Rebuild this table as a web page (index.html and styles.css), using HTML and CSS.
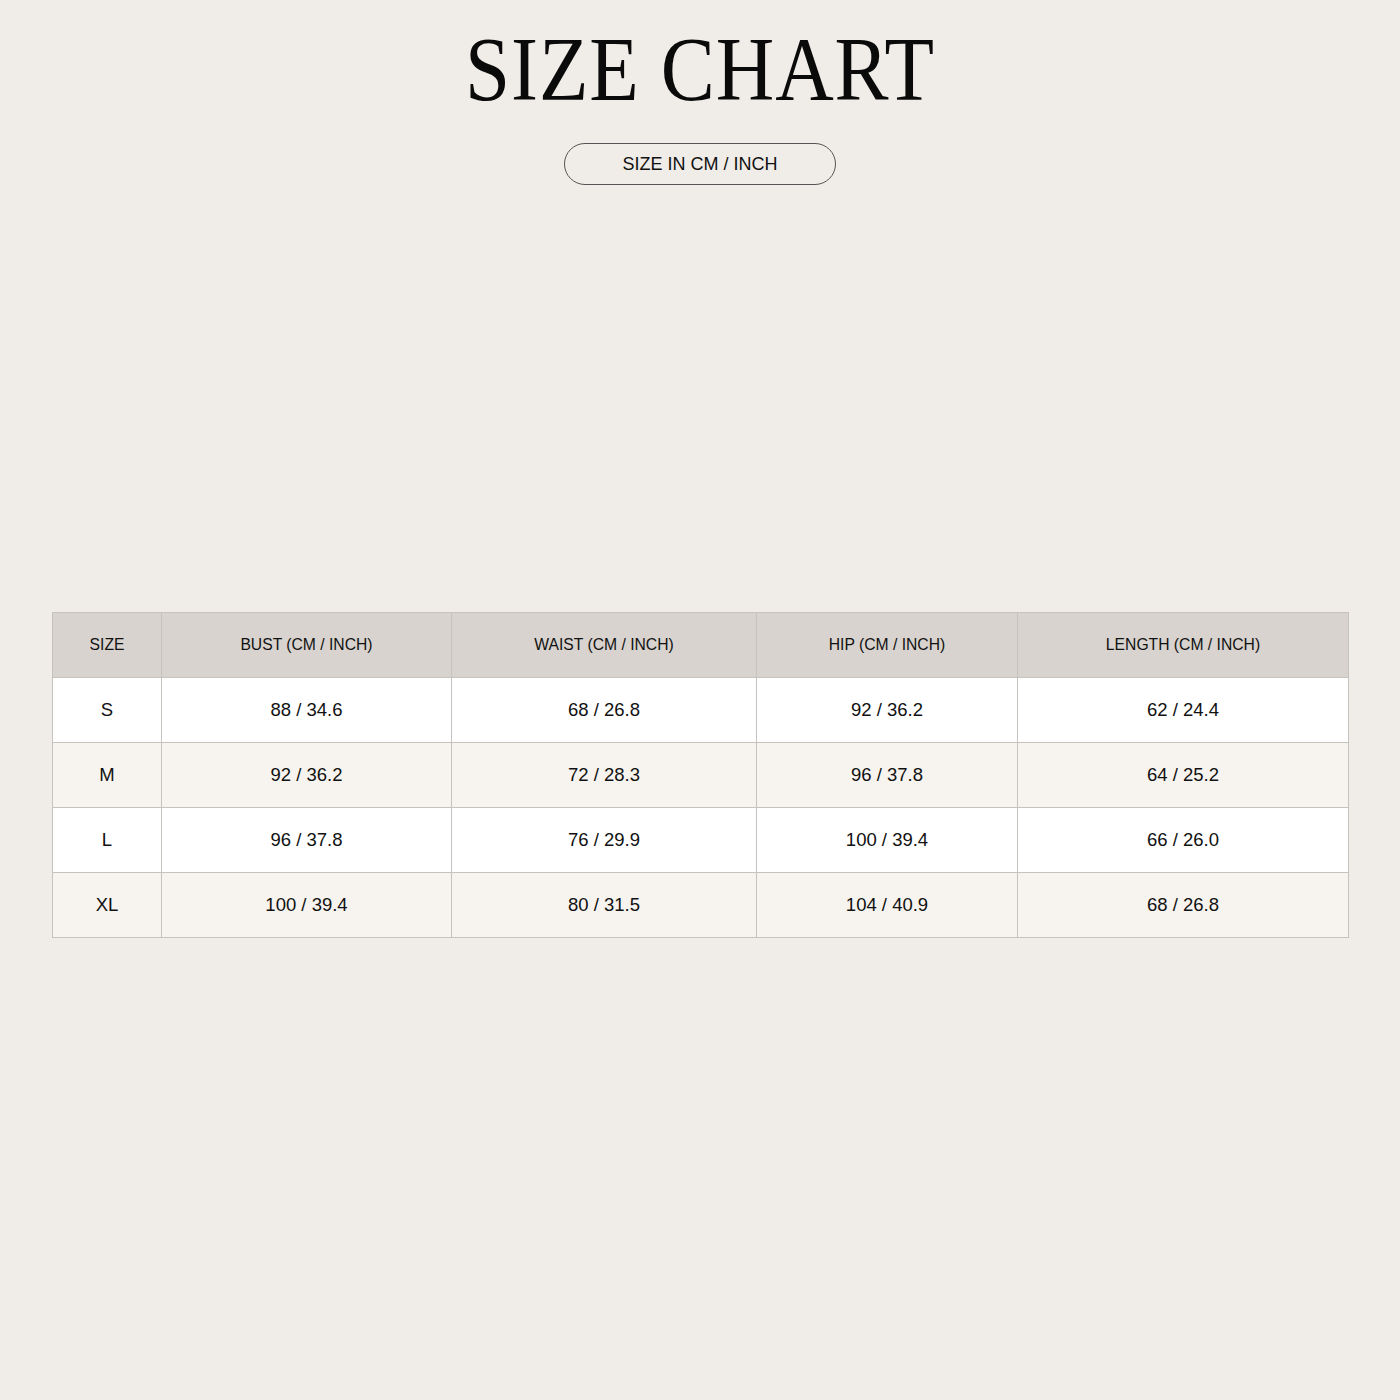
FILE: index.html
```html
<!DOCTYPE html>
<html>
<head>
<meta charset="utf-8">
<link rel="stylesheet" href="styles.css">
</head>
<body>
<header class="head">
  <h1 class="title">SIZE CHART</h1>
  <div class="pill">SIZE IN CM / INCH</div>
</header>
<main class="wrap">
  <table class="chart">
    <colgroup>
      <col class="c1"><col class="c2"><col class="c3"><col class="c4"><col class="c5">
    </colgroup>
    <thead>
      <tr><th>SIZE</th><th>BUST (CM / INCH)</th><th>WAIST (CM / INCH)</th><th>HIP (CM / INCH)</th><th>LENGTH (CM / INCH)</th></tr>
    </thead>
    <tbody>
      <tr><td>S</td><td>88 / 34.6</td><td>68 / 26.8</td><td>92 / 36.2</td><td>62 / 24.4</td></tr>
      <tr><td>M</td><td>92 / 36.2</td><td>72 / 28.3</td><td>96 / 37.8</td><td>64 / 25.2</td></tr>
      <tr><td>L</td><td>96 / 37.8</td><td>76 / 29.9</td><td>100 / 39.4</td><td>66 / 26.0</td></tr>
      <tr><td>XL</td><td>100 / 39.4</td><td>80 / 31.5</td><td>104 / 40.9</td><td>68 / 26.8</td></tr>
    </tbody>
  </table>
</main>
</body>
</html>
```
FILE: styles.css
```css
html, body {
  margin: 0;
  padding: 0;
  background: #f0ede8;
  width: 1400px;
  height: 1400px;
}
body {
  font-family: "Liberation Sans", Arial, sans-serif;
  color: #111;
}
.head {
  display: flex;
  flex-direction: column;
  align-items: center;
  padding-top: 20px;
}
.title {
  margin: 0;
  font-family: "Liberation Serif", "Times New Roman", serif;
  font-weight: 400;
  font-size: 90px;
  line-height: 100px;
  letter-spacing: 1px;
  color: #0a0a0a;
  transform: scaleX(0.9);
}
.pill {
  margin-top: 23px;
  width: 270px;
  height: 40px;
  border: 1px solid #555;
  border-radius: 21px;
  display: flex;
  align-items: center;
  justify-content: center;
  font-size: 18px;
  color: #111;
}
.wrap {
  padding: 427px 52px 0 52px;
}
.chart {
  width: 1296px;
  border-collapse: collapse;
  border: 1.5px solid #bfbbb6;
  table-layout: fixed;
}
.c1 { width: 109px; }
.c2 { width: 290px; }
.c3 { width: 305px; }
.c4 { width: 261px; }
.c5 { width: 331px; }
.chart th, .chart td {
  border: 1px solid #c6c2bd;
  text-align: center;
  padding: 0;
  height: 64px;
}
.chart th {
  background: #d8d3ce;
  font-weight: 400;
  font-size: 15.7px;
  color: #111;
}
.chart td {
  font-size: 18.5px;
  color: #111;
}
.chart tbody tr:nth-child(odd) td { background: #ffffff; }
.chart tbody tr:nth-child(even) td { background: #f7f4ef; }
```
